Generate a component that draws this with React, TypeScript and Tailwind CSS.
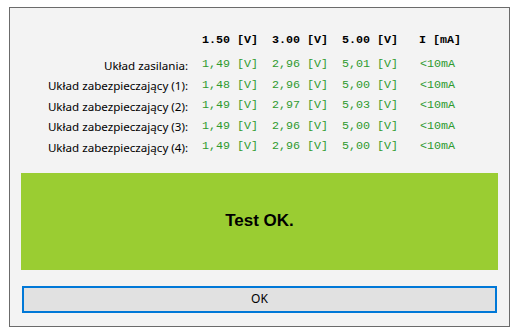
import React from 'react';

const rows = [
  { label: 'Układ zasilania:', v: ['1,49', '2,96', '5,01'] },
  { label: 'Układ zabezpieczający (1):', v: ['1,48', '2,96', '5,00'] },
  { label: 'Układ zabezpieczający (2):', v: ['1,49', '2,97', '5,03'] },
  { label: 'Układ zabezpieczający (3):', v: ['1,49', '2,96', '5,00'] },
  { label: 'Układ zabezpieczający (4):', v: ['1,49', '2,96', '5,00'] },
];

const mono = "font-['Liberation_Mono','Courier_New',monospace] text-[11.7px] whitespace-pre";
const sans = "font-['Noto_Sans','Open_Sans',sans-serif] text-[11.6px]";

export default function App() {
  return (
    <div className="w-[519px] h-[333px] bg-white pt-[7px] pl-[9px]">
      <div className="w-[501px] h-[320px] border border-[#6b6b6b] bg-[#f3f3f3] flex flex-col pt-[23px]">
        {/* header */}
        <div className="grid grid-cols-[178px_70px_70px_77px_1fr] h-[20px] items-center">
          <div />
          <div className={`${mono} font-bold text-black pl-[14px]`}>1.50 [V]</div>
          <div className={`${mono} font-bold text-black pl-[14px]`}>3.00 [V]</div>
          <div className={`${mono} font-bold text-black pl-[14px]`}>5.00 [V]</div>
          <div className={`${mono} font-bold text-black pl-[14px]`}>I [mA]</div>
        </div>

        <div className="mt-[4px] flex flex-col">
          {rows.map((r) => (
            <div key={r.label} className="grid grid-cols-[178px_70px_70px_77px_1fr] h-[20.5px] items-center">
              <div className={`${sans} text-black text-right`}>{r.label}</div>
              {r.v.map((x, i) => (
                <div key={i} className={`${mono} text-[#2e9a2e] pl-[14px]`}>{x} [V]</div>
              ))}
              <div className={`${mono} text-[#2e9a2e] pl-[15px]`}>&lt;10mA</div>
            </div>
          ))}
        </div>

        <div className="ml-[11px] mt-[15px] w-[477px] h-[97px] bg-[#9acd32] flex items-center justify-center">
          <span className="font-['Liberation_Sans',Arial,sans-serif] font-bold text-[17px] text-black">Test OK.</span>
        </div>

        <button className="ml-[12px] mt-[16px] w-[475px] h-[27px] border-2 border-[#0078d7] bg-[#e1e1e1] flex items-center justify-center font-['Noto_Sans',sans-serif] text-[12px] text-black">
          OK
        </button>
      </div>
    </div>
  );
}
